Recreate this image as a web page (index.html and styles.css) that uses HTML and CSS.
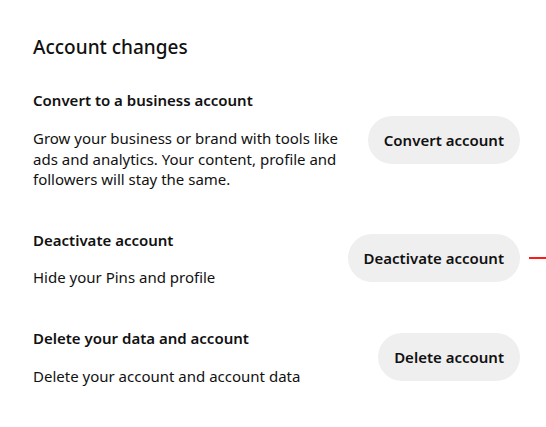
FILE: index.html
```html
<!DOCTYPE html>
<html>
<head>
<meta charset="utf-8">
<link rel="stylesheet" href="styles.css">
</head>
<body>
<main class="page">
  <h1 class="title">Account changes</h1>
  <section class="row row-first">
    <div class="info">
      <h2 class="heading">Convert to a business account</h2>
      <p class="desc">Grow your business or brand with tools like ads and analytics. Your content, profile and followers will stay the same.</p>
    </div>
    <button class="btn">Convert account</button>
  </section>
  <section class="row">
    <div class="info">
      <h2 class="heading">Deactivate account</h2>
      <p class="desc desc-tight">Hide your Pins and profile</p>
    </div>
    <div class="btn-wrap">
      <button class="btn">Deactivate account</button>
      <span class="marker"></span>
    </div>
  </section>
  <section class="row row-last">
    <div class="info">
      <h2 class="heading">Delete your data and account</h2>
      <p class="desc">Delete your account and account data</p>
    </div>
    <button class="btn">Delete account</button>
  </section>
</main>
</body>
</html>
```
FILE: styles.css
```css
html, body {
  margin: 0;
  padding: 0;
  background: #ffffff;
}
body {
  font-family: "Noto Sans", "Open Sans", sans-serif;
  color: #111111;
}
.page {
  padding: 33px 26px 0 33px;
}
.title {
  margin: 0;
  font-size: 19px;
  line-height: 28px;
  font-weight: 500;
}
.row {
  display: flex;
  align-items: center;
  justify-content: space-between;
  margin-top: 40px;
}
.row-first {
  margin-top: 29px;
}
.row-last {
  margin-top: 41px;
}
.info {
  width: 312px;
}
.heading {
  margin: 0;
  font-size: 15px;
  line-height: 20px;
  font-weight: 600;
}
.desc {
  margin: 18px 0 0;
  font-size: 15px;
  line-height: 20.5px;
  font-weight: 400;
}
.desc-tight {
  margin-top: 17px;
}
.btn {
  font-family: inherit;
  font-size: 15px;
  font-weight: 600;
  color: #111111;
  background: #efefef;
  border: none;
  border-radius: 24px;
  height: 48px;
  padding: 0 16px;
  white-space: nowrap;
}
.btn-wrap {
  position: relative;
  display: flex;
}
.marker {
  position: absolute;
  left: calc(100% + 9px);
  top: 23px;
  width: 17px;
  height: 2px;
  background: #ff1a1a;
}
```
